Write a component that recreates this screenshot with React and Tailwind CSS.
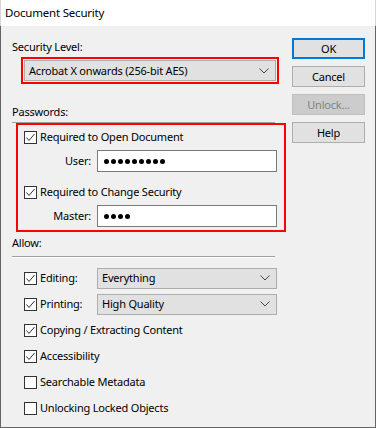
import React from "react";

const font = { fontFamily: '"Noto Sans", "Segoe UI", sans-serif' };

const Check = ({ checked }) => (
  <span className="w-[13px] h-[13px] shrink-0 border border-[#333333] bg-white flex items-center justify-center">
    {checked && (
      <svg width="11" height="11" viewBox="0 0 11 11">
        <polyline points="1.5,5.5 4,8.5 9.5,2" fill="none" stroke="#333333" strokeWidth="1" />
      </svg>
    )}
  </span>
);

const Chevron = () => (
  <svg width="10" height="6" viewBox="0 0 10 6" className="shrink-0">
    <polyline points="0.5,0.5 5,5 9.5,0.5" fill="none" stroke="#444444" strokeWidth="1" />
  </svg>
);

const Select = ({ value, className = "" }) => (
  <div className={`h-[21px] bg-[#e1e1e1] border border-[#adadad] flex items-center justify-between pl-[4px] pr-[6px] ${className}`}>
    <span>{value}</span>
    <Chevron />
  </div>
);

const Dots = ({ n }) => (
  <div className="flex items-center gap-[2px]">
    {Array.from({ length: n }).map((_, i) => (
      <span key={i} className="w-[5px] h-[5px] rounded-full bg-black" />
    ))}
  </div>
);

const Button = ({ children, primary, disabled }) => (
  <div
    className={`h-[21px] w-[73px] flex items-center justify-center ${
      primary
        ? "border-2 border-[#0078d7] bg-[#e1e1e1] text-black"
        : disabled
        ? "border border-[#bfbfbf] bg-[#cccccc] text-[#838383]"
        : "border border-[#adadad] bg-[#e1e1e1] text-black"
    }`}
  >
    {children}
  </div>
);

const Row = ({ checked, label, children }) => (
  <div className="h-[26px] flex items-center pl-[23px]">
    <Check checked={checked} />
    <span className={children ? "w-[60px] pl-[3px]" : "pl-[3px]"}>{label}</span>
    {children}
  </div>
);

export default function App() {
  return (
    <div className="w-[376px] h-[428px] flex flex-col text-[11px] leading-4 tracking-[-0.2px] text-black" style={font}>
      <div className="h-[26px] bg-white border-l border-r border-[#d4d4d4] flex items-center pl-[4px] text-[11.5px]">
        Document Security
      </div>
      <div className="flex-1 bg-[#f0f0f0] border-l border-r border-b border-[#646464] flex">
        <div className="w-[285px] flex flex-col pt-[13px]">
          <div className="ml-[11px] h-4">Security Level:</div>
          <div className="mt-[2px] ml-[20px] w-[258px] border-2 border-[#ff0000] p-px">
            <Select value="Acrobat X onwards (256-bit AES)" className="pl-[4px]" />
          </div>

          <div className="mt-[20px] ml-[11px] h-4">Passwords:</div>
          <div className="mt-[2px] ml-[11px] w-[263px] h-px bg-[#a0a0a0]" />
          <div className="ml-[15px] w-[270px] border-2 border-[#ff0000] pt-[4px] pb-[3px] pl-[6px] flex flex-col">
            <div className="h-4 flex items-center">
              <Check checked />
              <span className="pl-[3px]">Required to Open Document</span>
            </div>
            <div className="mt-[5px] flex items-center">
              <span className="w-[67px] text-right">User:</span>
              <div className="ml-[6px] w-[180px] h-[22px] bg-white border border-[#7a7a7a] flex items-center pl-[6px]">
                <Dots n={9} />
              </div>
            </div>
            <div className="mt-[12px] h-4 flex items-center">
              <Check checked />
              <span className="pl-[3px]">Required to Change Security</span>
            </div>
            <div className="mt-[5px] flex items-center">
              <span className="w-[67px] text-right">Master:</span>
              <div className="ml-[6px] w-[180px] h-[22px] bg-white border border-[#7a7a7a] flex items-center pl-[6px]">
                <Dots n={4} />
              </div>
            </div>
          </div>

          <div className="mt-[3px] ml-[11px] h-4">Allow:</div>
          <div className="mt-[5px] ml-[11px] w-[263px] border-t border-b border-t-[#a0a0a0] border-b-white" />
          <div className="mt-[7px] flex flex-col">
            <Row checked label="Editing:">
              <Select value="Everything" className="w-[180px]" />
            </Row>
            <Row checked label="Printing:">
              <Select value="High Quality" className="w-[180px]" />
            </Row>
            <Row checked label="Copying / Extracting Content" />
            <Row checked label="Accessibility" />
            <Row label="Searchable Metadata" />
            <Row label="Unlocking Locked Objects" />
          </div>
        </div>

        <div className="ml-[6px] pt-[12px] flex flex-col gap-[7px]">
          <Button primary>OK</Button>
          <Button>Cancel</Button>
          <Button disabled>Unlock...</Button>
          <Button>Help</Button>
        </div>
      </div>
    </div>
  );
}
